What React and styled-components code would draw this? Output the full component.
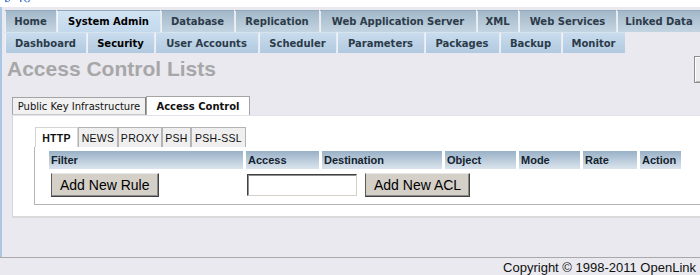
import React from "react";
import styled, { createGlobalStyle } from "styled-components";

const Global = createGlobalStyle`
  html, body { margin: 0; padding: 0; overflow: hidden; background: #e9e9ef; }
  #root { width: 780px; }
`;

const Page = styled.div`
  width: 780px;
  font-family: "DejaVu Sans", Verdana, sans-serif;
`;

const TopBar = styled.div`
  height: 7px;
  background: #fff;
  overflow: hidden;
  svg { display: block; }
`;

const Main = styled.div`
  height: 250px;
  box-sizing: border-box;
  border-left: 2px solid #a9c6e2;
  padding: 3px 0 0 3px;
  background: #e9e9ef;
`;

const TabRow = styled.div`
  display: flex;
  gap: 1px;
  height: ${(p) => p.$h}px;
`;

const NavTab = styled.div`
  box-sizing: border-box;
  width: ${(p) => p.$w}px;
  flex: 0 0 auto;
  display: flex;
  align-items: center;
  justify-content: center;
  font-size: 10px;
  font-weight: bold;
  white-space: nowrap;
  color: ${(p) => (p.$active ? "#000" : "#2c3b49")};
  background: ${(p) =>
    p.$sub
      ? "linear-gradient(#c9dcee, #b1c9df)"
      : p.$active
      ? "linear-gradient(#d0e3f3, #c3d9ec)"
      : "linear-gradient(#a2b8c9, #c4d4e1)"};
  border-top: 1px solid ${(p) => (p.$sub ? "#d6e4f0" : "#93a9bb")};
  box-shadow: inset 1px 0 0 rgba(255, 255, 255, 0.7);
`;

const TitleRow = styled.div`
  display: flex;
  align-items: flex-start;
  height: 27px;
  margin-top: 3px;
`;

const Title = styled.h1`
  flex: 0 0 689px;
  margin: 1px 0 0;
  padding-left: 2px;
  box-sizing: border-box;
  font: bold 21px/24px "Liberation Sans", Arial, sans-serif;
  color: #a7a7a7;
`;

const CornerButton = styled.div`
  box-sizing: border-box;
  width: 60px;
  height: 27px;
  border: 1px solid #8c8c8c;
  box-shadow: inset 1px 1px 0 #fff, inset -1px -1px 0 #b8b8b8;
  background: #ececec;
`;

const Section = styled.div`
  margin: 13px 0 0 7px;
`;

const OuterTabs = styled.div`
  display: flex;
  align-items: flex-end;
  height: 19px;
`;

const OuterTab = styled.div`
  box-sizing: border-box;
  width: ${(p) => p.$w}px;
  height: ${(p) => (p.$active ? 19 : 18)}px;
  display: flex;
  align-items: center;
  justify-content: center;
  font-size: 10px;
  font-weight: ${(p) => (p.$active ? "bold" : "normal")};
  color: #111;
  background: ${(p) => (p.$active ? "#fff" : "#f1f1f1")};
  border: 1px solid #a4a4a4;
  border-bottom: ${(p) => (p.$active ? "none" : "1px solid #c8c8c8")};
  border-right-color: ${(p) => (p.$active ? "#a4a4a4" : "#7c7c7c")};
  white-space: nowrap;
`;

const Panel = styled.div`
  background: #fff;
  border-left: 1px solid #d6d6d6;
  border-top: 1px solid #e2e2ea;
  border-bottom: 2px solid #dadada;
  padding: 11px 0 11px 21px;
`;

const InnerTabs = styled.div`
  display: flex;
  height: 20px;
  margin-left: 1px;
`;

const InnerTab = styled.div`
  box-sizing: border-box;
  width: ${(p) => p.$w}px;
  display: flex;
  align-items: center;
  justify-content: center;
  font-family: "Liberation Sans", Arial, sans-serif;
  font-size: 10.5px;
  letter-spacing: 0.3px;
  font-weight: ${(p) => (p.$active ? "bold" : "normal")};
  color: #111;
  background: ${(p) => (p.$active ? "#fff" : "#efefef")};
  border: 1px solid ${(p) => (p.$active ? "#d4d4d4" : "#b4b4b4")};
  border-bottom: none;
`;

const InnerBox = styled.div`
  border-left: 1px solid #b4b4b4;
  border-bottom: 1px solid #b4b4b4;
  padding: 4px 0 7px 14px;
`;

const HeaderGrid = styled.div`
  display: grid;
  grid-template-columns: 194px 73px 120px 71px 61px 54px 41px;
  column-gap: 3px;
  height: 18px;
`;

const HeadCell = styled.div`
  display: flex;
  align-items: center;
  padding-left: 2px;
  font: bold 11px "Liberation Sans", Arial, sans-serif;
  color: #14222e;
  background: linear-gradient(#98b0c6, #c4d3e0 65%, #dbe4ed);
`;

const BodyRow = styled.div`
  display: flex;
  align-items: center;
  margin-top: 4px;
  height: 24px;
`;

const FilterCell = styled.div`
  width: 197px;
  flex: 0 0 auto;
  padding-left: 2px;
  box-sizing: border-box;
`;

const Btn = styled.button`
  height: 24px;
  padding: 0 8px;
  margin-left: ${(p) => p.$ml || 0}px;
  font: 14px "Liberation Sans", Arial, sans-serif;
  color: #000;
  background: #d4d0c8;
  border: 1px solid;
  border-color: #e8e8e8 #404040 #404040 #5a5a5a;
  box-shadow: inset -1px -1px 0 #8a8a8a;
  white-space: nowrap;
`;

const TextInput = styled.input`
  box-sizing: border-box;
  width: 110px;
  height: 22px;
  margin-left: 1px;
  border: 1px solid;
  border-color: #404040 #d4d0c8 #d4d0c8 #404040;
  box-shadow: inset 1px 1px 0 #909090;
  background: #fff;
`;

const Footer = styled.div`
  width: 700px;
  box-sizing: border-box;
  border-top: 1px solid #a9a9a9;
  padding: 2px 4px 0 0;
  text-align: right;
  font: 13px/16px "Liberation Sans", Arial, sans-serif;
  color: #111;
`;

const row1 = [
  ["Home", 51],
  ["System Admin", 103, true],
  ["Database", 73],
  ["Replication", 84],
  ["Web Application Server", 156],
  ["XML", 41],
  ["Web Services", 97],
  ["Linked Data", 84],
];

const row2 = [
  ["Dashboard", 81],
  ["Security", 67, true],
  ["User Accounts", 103],
  ["Scheduler", 77],
  ["Parameters", 87],
  ["Packages", 74],
  ["Backup", 61],
  ["Monitor", 63],
];

const protocols = [
  ["HTTP", 43, true],
  ["NEWS", 40],
  ["PROXY", 44],
  ["PSH", 29],
  ["PSH-SSL", 55],
];

const headers = ["Filter", "Access", "Destination", "Object", "Mode", "Rate", "Action"];

export default function App() {
  return (
    <Page>
      <Global />
      <TopBar>
        <svg width="40" height="7" viewBox="0 0 40 7">
          <path d="M5 0h1.6v1c.8.5 1.8.2 2.6-1h1c-.9 1.6-2.2 2.4-4 2.1L5 2.1z" fill="#4f80c4" />
          <path d="M20 0h1.5v2.1H20zM24 0h1.5c0 1.2.9 1.9 2.7 1.7l.5-1.7h1.3l-.7 2.1c-2.4.5-4.7 0-5.3-2.1z" fill="#4f80c4" />
        </svg>
      </TopBar>
      <Main>
        <TabRow $h={22}>
          {row1.map(([t, w, a]) => (
            <NavTab key={t} $w={w} $active={a}>
              {t}
            </NavTab>
          ))}
        </TabRow>
        <TabRow $h={21}>
          {row2.map(([t, w, a]) => (
            <NavTab key={t} $w={w} $active={a} $sub>
              {t}
            </NavTab>
          ))}
        </TabRow>
        <TitleRow>
          <Title>Access Control Lists</Title>
          <CornerButton />
        </TitleRow>
        <Section>
          <OuterTabs>
            <OuterTab $w={134}>Public Key Infrastructure</OuterTab>
            <OuterTab $w={104} $active>
              Access Control
            </OuterTab>
          </OuterTabs>
          <Panel>
            <InnerTabs>
              {protocols.map(([t, w, a]) => (
                <InnerTab key={t} $w={w} $active={a}>
                  {t}
                </InnerTab>
              ))}
            </InnerTabs>
            <InnerBox>
              <HeaderGrid>
                {headers.map((h) => (
                  <HeadCell key={h}>{h}</HeadCell>
                ))}
              </HeaderGrid>
              <BodyRow>
                <FilterCell>
                  <Btn>Add New Rule</Btn>
                </FilterCell>
                <TextInput type="text" />
                <Btn $ml={8}>Add New ACL</Btn>
              </BodyRow>
            </InnerBox>
          </Panel>
        </Section>
      </Main>
      <Footer>Copyright © 1998-2011 OpenLink</Footer>
    </Page>
  );
}
